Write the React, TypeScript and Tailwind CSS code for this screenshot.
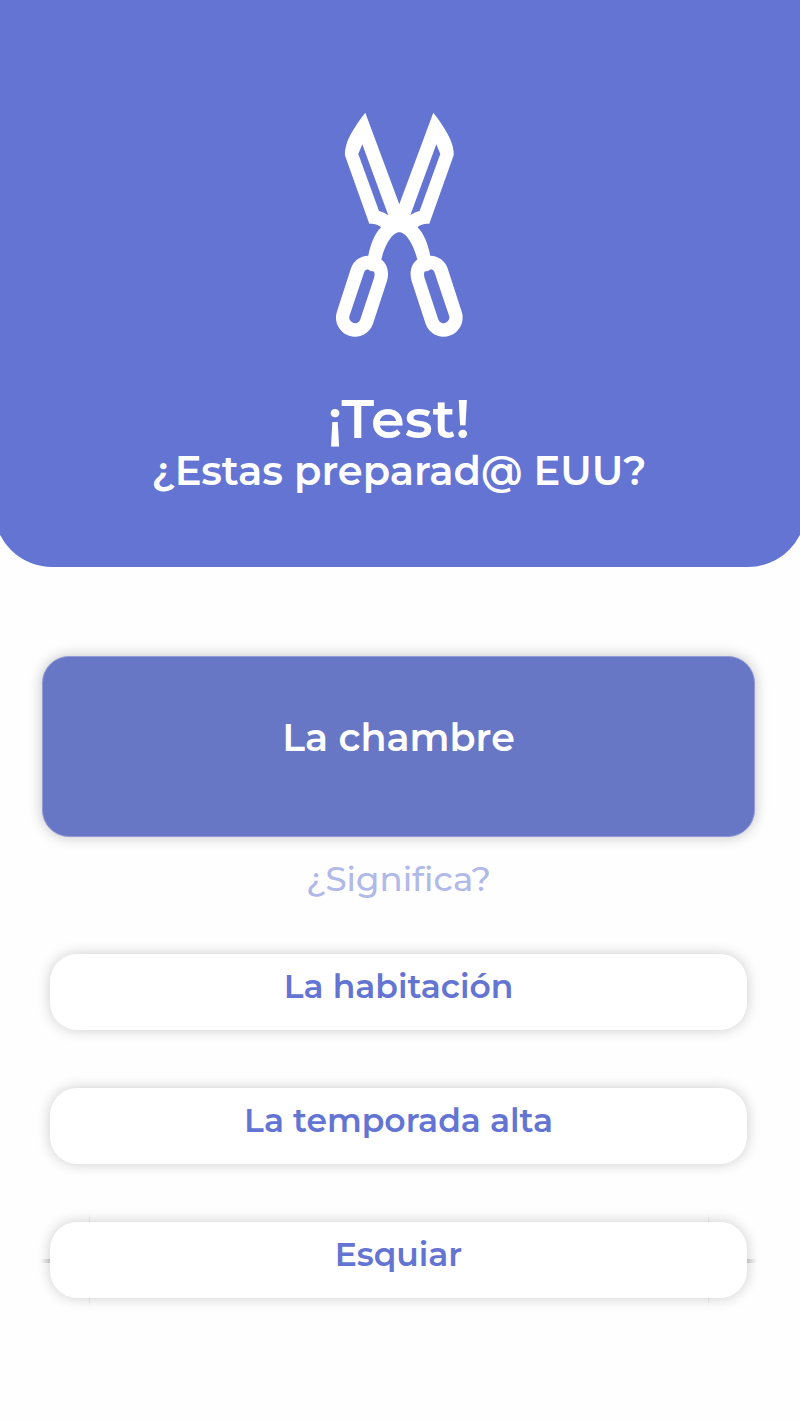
const answers = ["La habitación", "La temporada alta", "Esquiar"]

const Blade = () => (
  <path
    fillRule="evenodd"
    d="M30.300 0.700 C22 11 13 25 11 34 C10 38 9.700 41 10 43.500 L34.300 111.700 C39 111.500 44 112.500 46 115.500 C40 121 35.500 132 33.300 143.700 C25 144 18.500 148.700 15.900 156.600 L1.900 199.800 A19 19 0 0 0 38.100 211.600 L52.100 168.400 C54.500 160 52 151.500 46.300 147.500 C49.500 134 57 120 65 120 L65 92.300 L64.300 92.300 Z
    M27.300 32.300 L53.300 103.300 C51 101.500 47.500 99.500 44 99 L23.300 42 Z
    M29.300 159.700 L14.600 203.500 A5.700 5.700 0 0 0 25.300 207.500 L39 166 C39.600 163.500 39.900 162 39 159.500 C36.500 159.500 34.500 158.700 33 157.300 Q30 157.500 29.300 159.700 Z"
  />
)

const Shears = () => (
  <svg width="128" height="226" viewBox="0 0 128 226" fill="white" aria-hidden="true">
    <Blade />
    <g transform="translate(128.6 0) scale(-1 1)">
      <Blade />
    </g>
  </svg>
)

const Header = () => (
  <header className="-mx-1.5 flex h-[567px] flex-col items-center rounded-b-[58px] bg-[#6474d3] pt-28 pr-0.5 text-white">
    <Shears />
    <h1 className="mt-[53px] text-[54px] leading-[56px] font-semibold">¡Test!</h1>
    <p className="text-[40px] leading-[48px] font-semibold">¿Estas preparad@ EUU?</p>
  </header>
)

// hairlines that stick out from under the last answer
const Seams = () => (
  <div className="pointer-events-none absolute -inset-x-2.5 -inset-y-2.5" aria-hidden="true">
    <div className="absolute inset-y-0 left-[49px] w-px bg-linear-to-b from-transparent via-neutral-400 to-transparent" />
    <div className="absolute inset-y-0 right-[48px] w-px bg-linear-to-b from-transparent via-neutral-400 to-transparent" />
    <div className="absolute inset-x-0 top-[47px] flex h-1 justify-between">
      <span className="w-2.5 bg-linear-to-r from-transparent to-neutral-300" />
      <span className="w-2.5 bg-linear-to-l from-transparent to-neutral-300" />
    </div>
  </div>
)

export default function App() {
  return (
    <div className="min-h-screen overflow-x-clip bg-[#fefefe] font-[Montserrat,Inter,sans-serif]">
      <Header />
      <main className="flex flex-col pt-[89px] pr-[45px] pb-[124px] pl-[42px] text-center">
        <div className="h-[181px] rounded-[27px] border border-[#919bd8] bg-[#6876c6] pt-[57px] shadow-[0_0_14px_rgba(0,0,0,0.24)]">
          <h2 className="text-[38px] leading-[48px] font-semibold text-white">La chambre</h2>
        </div>
        <p className="mt-5 text-[34px] leading-[44px] font-medium text-[#b1b9e9]">¿Significa?</p>
        <div className="mx-2 mt-[53px] flex flex-col gap-[58px]">
          {answers.map((answer, i) => (
            <div key={answer} className="relative">
              {i === answers.length - 1 && <Seams />}
              <button
                type="button"
                className="relative h-[76px] w-full cursor-pointer rounded-[27px] bg-white pb-3 text-[33px] leading-[44px] font-semibold text-[#6474d3] shadow-[0_0_14px_rgba(0,0,0,0.2)]"
              >
                {answer}
              </button>
            </div>
          ))}
        </div>
      </main>
    </div>
  )
}
